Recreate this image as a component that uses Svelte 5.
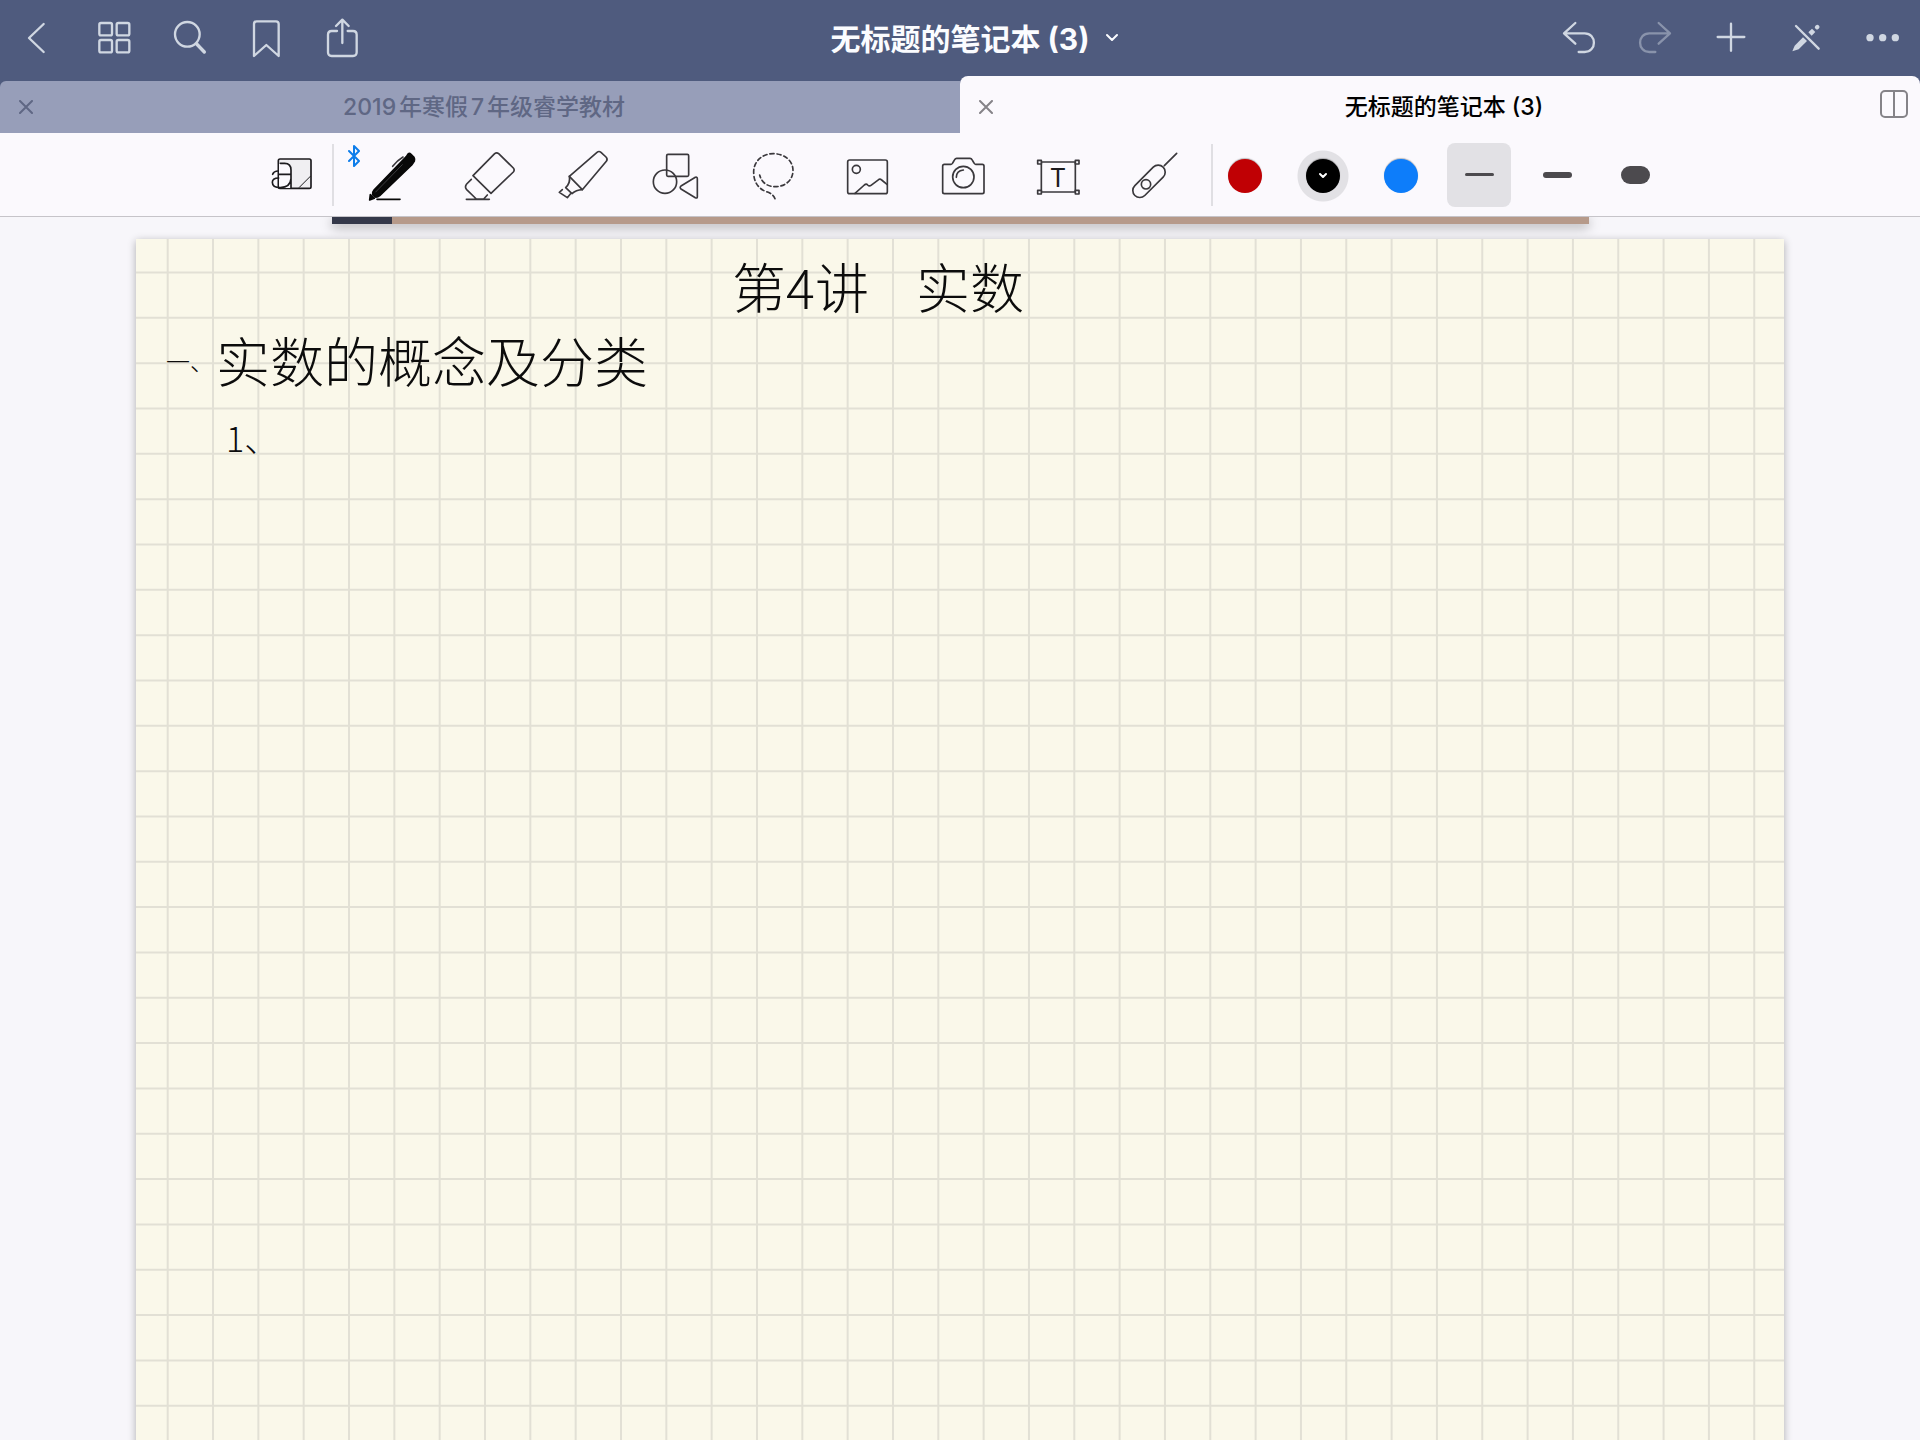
<script lang="ts">
    type Tab = { id: number; title: string };

    const tabs: Tab[] = [
        { id: 1, title: "2019年寒假7年级睿学教材" },
        { id: 2, title: "无标题的笔记本 (3)" },
    ];
    const colors = [
        { name: "红色", value: "#c00004" },
        { name: "黑色", value: "#000000" },
        { name: "蓝色", value: "#0d7dfa" },
    ];
    const strokes = [
        { name: "细", size: 3 },
        { name: "中", size: 6 },
        { name: "粗", size: 18 },
    ];

    // page ruling, in page units
    const cell = 45.33;
    const columns = Array.from({ length: 36 }, (_, i) => 31.7 + i * cell);
    const rows = Array.from({ length: 52 }, (_, i) => 33.5 + i * cell);

    let activeTab = $state(2);
    let color = $state("#000000");
    let stroke = $state(3);
</script>

<div class="app">
    <header class="navbar">
        <nav class="actions">
            <button aria-label="返回">
                <svg viewBox="42 42 144 144"><path d="M131 72 87 114l44 42" /></svg>
            </button>
            <button aria-label="缩略图">
                <svg viewBox="270 42 144 144">
                    <rect x="298" y="69" width="38" height="37" rx="5" />
                    <rect x="350" y="69" width="38" height="37" rx="5" />
                    <rect x="298" y="120" width="38" height="37" rx="5" />
                    <rect x="350" y="120" width="38" height="37" rx="5" />
                </svg>
            </button>
            <button aria-label="搜索">
                <svg viewBox="498 42 144 144">
                    <circle cx="562" cy="103" r="37" />
                    <path d="m590 132 23 24" stroke-width="10" />
                </svg>
            </button>
            <button aria-label="书签">
                <svg viewBox="726 42 144 144">
                    <path d="M762 168V72q0-8 8-8h58q8 0 8 8v96l-37-33z" />
                </svg>
            </button>
            <button aria-label="分享">
                <svg viewBox="954 42 144 144">
                    <path d="M1011 93h-16q-11 0-11 11v53q0 11 11 11h64q11 0 11-11v-53q0-11-11-11h-16" />
                    <path d="M1027 129V60m-19 18 19-19 19 19" />
                </svg>
            </button>
        </nav>

        <button class="doc-title">
            <span>无标题的笔记本 (3)</span>
            <svg viewBox="0 0 12 8"><path d="m1 2 5 5 5-5" /></svg>
        </button>

        <nav class="actions right">
            <button aria-label="撤销">
                <svg viewBox="102 42 144 144">
                    <path d="M166 69l-34 31 34 31M134 100h60c37 0 37 56 0 56h-18" />
                </svg>
            </button>
            <button aria-label="重做" disabled>
                <svg viewBox="330 42 144 144">
                    <path d="M416 69l34 31-34 31M448 100h-60c-37 0-37 56 0 56h18" />
                </svg>
            </button>
            <button aria-label="添加">
                <svg viewBox="558 42 144 144"><path d="M633 71v81M593 111h80" /></svg>
            </button>
            <button aria-label="只读模式">
                <svg viewBox="786 42 144 144">
                    <path d="m828 78 68 68" />
                    <path d="m891 82 1-1" stroke-width="13" />
                    <path class="blunt" d="m870 102 11-11" />
                    <path class="solid" d="m817 154 7-17 25-25 12 11-25 25z" />
                </svg>
            </button>
            <button aria-label="更多">
                <svg viewBox="1014 42 144 144">
                    <circle class="solid" cx="1050" cy="113" r="11" />
                    <circle class="solid" cx="1088" cy="113" r="11" />
                    <circle class="solid" cx="1126" cy="113" r="11" />
                </svg>
            </button>
        </nav>
    </header>

    <div class="tabs">
        {#each tabs as tab (tab.id)}
            <div class="tab" class:active={tab.id === activeTab}>
                <button class="close" aria-label="关闭标签页">
                    <svg viewBox="0 0 14 14"><path d="m1 1 12 12M13 1 1 13" /></svg>
                </button>
                <button class="tab-title" onclick={() => (activeTab = tab.id)}>
                    {tab.title}
                </button>
                {#if tab.id === activeTab}
                    <button class="split" aria-label="分屏">
                        <svg viewBox="0 0 28 28">
                            <rect x="1" y="1" width="26" height="26" rx="4" />
                            <path d="M14 1v26" />
                        </svg>
                    </button>
                {/if}
            </div>
        {/each}
    </div>

    <div class="toolbar">
        <button class="tool zoom" aria-label="缩放窗口">
            <svg viewBox="72 48 171 171">
                <rect x="115" y="87" width="98" height="88" rx="5" fill="#f0eff2" />
                <path d="M117 101h18q18 0 18 19v54h-36z" fill="#fbf9fd" stroke="none" />
                <path d="M121 100h13q19 0 19 20v54M117 133h36M98 133q3-9 14-10M116 144q-19 0-19 13 0 16 24 16 30-1 32-27" />
                <path d="m178 172 33-33" stroke-width="3" />
            </svg>
        </button>
        <span class="divider"></span>

        <div class="tools">
            <button class="tool" aria-label="钢笔">
                <svg viewBox="372 48 171 171">
                    <path
                        d="M402 180 499 80l6-9q4-2 8 2l9 9q3 5 1 11l-8 12-96 92q-6 5-14 4l-7-7q-2-7 4-14z"
                        fill="#080808"
                        stroke="#080808"
                    />
                    <path d="M458 109q14-18 31-28" />
                    <path d="m407 186 80-82" stroke="#3c3c3f" stroke-width="3" />
                    <path d="M391 194l12 11-14 5z" fill="#080808" stroke="#080808" />
                    <path d="M411 208h69" stroke="#080808" />
                </svg>
                <svg class="bluetooth" viewBox="0 0 12 22">
                    <path d="m1 6 10 10-5 5V1l5 5L1 16" />
                </svg>
            </button>
            <button class="tool" aria-label="橡皮擦">
                <svg viewBox="657 48 171 171">
                    <path d="m699 137 65-66q6-5 12 0l44 43q5 6 0 12l-67 64z" />
                    <path d="m694 148-14 14q-7 9 0 17l29 28h22l11-12M679 208h69" />
                </svg>
            </button>
            <button class="tool" aria-label="荧光笔">
                <svg viewBox="942 48 171 171">
                    <path d="m988 139 83-72q6-5 12 0l15 14q6 6 1 13l-72 85z" />
                    <path d="M988 139q4 19-11 34l19 18q12-11 31-12M967 179l-9 8 24 16 9-11" />
                </svg>
            </button>
            <button class="tool" aria-label="形状">
                <svg viewBox="57 48 171 171">
                    <rect x="110" y="73" width="66" height="66" rx="4" />
                    <circle cx="105" cy="155" r="35" />
                    <path d="m153 168 43-26q6-2 6 4v54q0 6-6 3l-43-26q-5-4 0-9z" />
                </svg>
            </button>
            <button class="tool" aria-label="套索">
                <svg viewBox="342 48 171 171">
                    <path
                        d="M435 206q-5-14-26-21c-25-9-38-30-38-59 0-32 25-55 59-55s59 22 59 50-22 49-53 49c-24 0-41-12-47-35"
                        stroke-dasharray="12 9"
                    />
                </svg>
            </button>
            <button class="tool" aria-label="图片">
                <svg viewBox="627 48 171 171">
                    <rect x="653" y="90" width="119" height="101" rx="6" />
                    <circle cx="679" cy="118" r="12" />
                    <path d="m675 190 28-25q6-5 10 0 5 5 10 1l24-18q4-2 8 2l16 13" />
                </svg>
            </button>
            <button class="tool" aria-label="相机">
                <svg viewBox="42 48 171 171">
                    <path
                        d="M73 103h20q3 0 5-4l6-10q2-4 6-4h40q4 0 6 4l6 10q2 4 5 4h20q5 0 5 5v78q0 5-5 5H73q-5 0-5-5v-78q0-5 5-5z"
                    />
                    <circle cx="130" cy="141" r="32" />
                    <path d="M109 142q0-20 21-22" />
                </svg>
            </button>
            <button class="tool" aria-label="文本">
                <svg viewBox="327 48 171 171">
                    <rect x="364" y="96" width="102" height="90" />
                    <g fill="#fbf9fd">
                        <rect x="353" y="91" width="11" height="11" />
                        <rect x="466" y="91" width="11" height="11" />
                        <rect x="353" y="181" width="11" height="11" />
                        <rect x="466" y="181" width="11" height="11" />
                    </g>
                    <text x="414" y="170" text-anchor="middle">T</text>
                </svg>
            </button>
            <button class="tool" aria-label="激光笔">
                <svg viewBox="612 48 171 171">
                    <rect x="627" y="133" width="120" height="42" rx="21" transform="rotate(-45 687 154)" />
                    <circle cx="678" cy="163" r="14" />
                    <path d="m733 107 37-37" />
                </svg>
            </button>
        </div>
        <span class="divider"></span>

        <div class="presets colors">
            {#each colors as c (c.value)}
                <button
                    class="swatch"
                    class:selected={c.value === color}
                    aria-label={c.name}
                    onclick={() => (color = c.value)}
                >
                    <span class="dot" style="background: {c.value}">
                        {#if c.value === color}
                            <svg viewBox="0 0 10 8"><path d="m2 2 3 3 3-3" /></svg>
                        {/if}
                    </span>
                </button>
            {/each}
        </div>
        <div class="presets">
            {#each strokes as s (s.size)}
                <button
                    class="stroke"
                    class:selected={s.size === stroke}
                    aria-label={s.name}
                    onclick={() => (stroke = s.size)}
                >
                    <span style="height: {s.size}px"></span>
                </button>
            {/each}
        </div>
    </div>

    <main class="canvas">
        <div class="previous"></div>
        <article class="page">
            <svg viewBox="0 0 1648 2331">
                {#each columns as x}
                    <path class="column" d="M{x} 0v2331" />
                {/each}
                {#each rows as y}
                    <path class="row" d="M0 {y}h1648" />
                {/each}
                <g class="ink">
                    <text x="596" y="70">第4讲</text>
                    <text x="780" y="70">实数</text>
                    <text class="numeral" x="30" y="132">一、</text>
                    <text x="80" y="144">实数的概念及分类</text>
                    <text class="item" x="90" y="213">1、</text>
                </g>
            </svg>
        </article>
    </main>
</div>

<style>
    :global(body) {
        background: #f7f6fa;
    }

    .app {
        display: flex;
        flex-direction: column;
        height: 100vh;
        overflow: hidden;
        font-family: Inter, "Noto Sans CJK SC", sans-serif;
    }

    button {
        display: flex;
        align-items: center;
        justify-content: center;
        padding: 0;
        border: 0;
        background: none;
        color: inherit;
        font: inherit;
        cursor: pointer;
    }

    svg {
        display: block;
        fill: none;
        stroke: currentColor;
        stroke-linecap: round;
        stroke-linejoin: round;
    }

    .navbar {
        display: grid;
        grid-template-columns: 1fr auto 1fr;
        flex: none;
        height: 76px;
        background: #4f5b7e;
        color: #d0d7e2;
    }

    .actions {
        display: flex;
    }

    .actions.right {
        justify-content: flex-end;
    }

    .actions button {
        width: 76px;
    }

    .actions button:disabled {
        opacity: 0.45;
    }

    .actions svg {
        width: 48px;
        height: 48px;
        stroke-width: 7;
    }

    .actions .solid {
        fill: currentColor;
        stroke: none;
    }

    .actions .blunt {
        stroke-width: 14;
        stroke-linecap: butt;
    }

    .doc-title {
        gap: 16px;
        padding: 0 0 3px 28px;
        color: #fbfcff;
        font-size: 30px;
        font-weight: 700;
    }

    .doc-title svg {
        width: 12px;
        height: 8px;
        stroke-width: 2;
    }

    .tabs {
        display: flex;
        align-items: flex-end;
        flex: none;
        height: 57px;
        background: #4f5b7e;
    }

    .tab {
        display: grid;
        grid-template-columns: 52px 1fr 52px;
        flex: 1;
        box-sizing: border-box;
        height: 52px;
        border-radius: 6px 0 0 0;
        background: #979eb9;
        color: #5f6784;
        font-size: 23px;
        font-weight: 500;
    }

    .tab.active {
        height: 57px;
        padding-top: 5px;
        border-radius: 8px 8px 0 0;
        background: #fbf9fd;
        color: #000;
    }

    .tab-title {
        padding: 0 0 4px 8px;
        text-autospace: normal;
    }

    .close svg {
        width: 14px;
        height: 14px;
        stroke-width: 2;
    }

    .active .close,
    .split {
        color: #858388;
    }

    .split {
        padding-bottom: 6px;
    }

    .split svg {
        width: 28px;
        height: 28px;
        stroke-width: 2;
    }

    .toolbar {
        display: flex;
        align-items: center;
        justify-content: center;
        flex: none;
        height: 83px;
        padding-left: 11px;
        border-bottom: 1px solid #c6c4c9;
        background: #fbf9fd;
        z-index: 1;
    }

    .tools {
        display: flex;
    }

    .tool {
        position: relative;
        width: 95px;
        color: #3a383c;
    }

    .tool.zoom {
        width: 57px;
        margin-right: 11px;
        color: #1c1b1e;
    }

    .tool svg {
        width: 57px;
        height: 57px;
        stroke-width: 5;
    }

    .tool text {
        fill: #1c1b1e;
        stroke: none;
        font-size: 76px;
        font-weight: 400;
    }

    .tool .bluetooth {
        position: absolute;
        top: -1px;
        left: 3px;
        width: 12px;
        height: 22px;
        color: #0d7dea;
        stroke-width: 2;
    }

    .divider {
        width: 2px;
        height: 62px;
        background: #e0dfe3;
    }

    .divider + .tools {
        margin: 0 11px;
    }

    .presets {
        display: flex;
        gap: 14px;
    }

    .colors {
        padding-top: 3px;
        margin-right: 14px;
    }

    .swatch {
        width: 64px;
        height: 52px;
    }

    .swatch.selected {
        background: radial-gradient(circle at center, #e2e1e5 25px, transparent 26px);
    }

    .dot {
        display: flex;
        align-items: center;
        justify-content: center;
        width: 34px;
        height: 34px;
        border-radius: 50%;
        box-shadow: 0 -1px 1px rgb(0 0 0 / 0.25);
        color: #fff;
    }

    .dot svg {
        width: 10px;
        height: 8px;
        stroke-width: 2;
    }

    .stroke {
        width: 64px;
        height: 64px;
        border-radius: 8px;
    }

    .stroke.selected {
        background: #e2e1e5;
    }

    .stroke span {
        width: 29px;
        border-radius: 9px;
        background: #4c4a4e;
    }

    .canvas {
        flex: 1;
        min-height: 0;
        overflow: hidden;
    }

    .previous {
        height: 7px;
        margin: 0 331px 15px 332px;
        background: linear-gradient(to right, #343849 60px, #b69a8a 60px);
        box-shadow: 0 3px 12px rgb(0 0 0 / 0.35);
    }

    .page {
        position: relative;
        margin: 0 136px;
        background: #faf8ea;
        box-shadow: 0 2px 8px rgb(0 0 0 / 0.3);
    }

    .page svg {
        width: 100%;
    }

    .column,
    .row {
        stroke: #e2e0d5;
        stroke-width: 2;
    }

    .ink {
        fill: #0c0c0c;
        stroke: none;
        font-family: "Noto Sans CJK SC", sans-serif;
        font-size: 54px;
        font-weight: 300;
    }

    .ink .numeral {
        font-size: 24px;
    }

    .ink .item {
        font-size: 34px;
    }
</style>
